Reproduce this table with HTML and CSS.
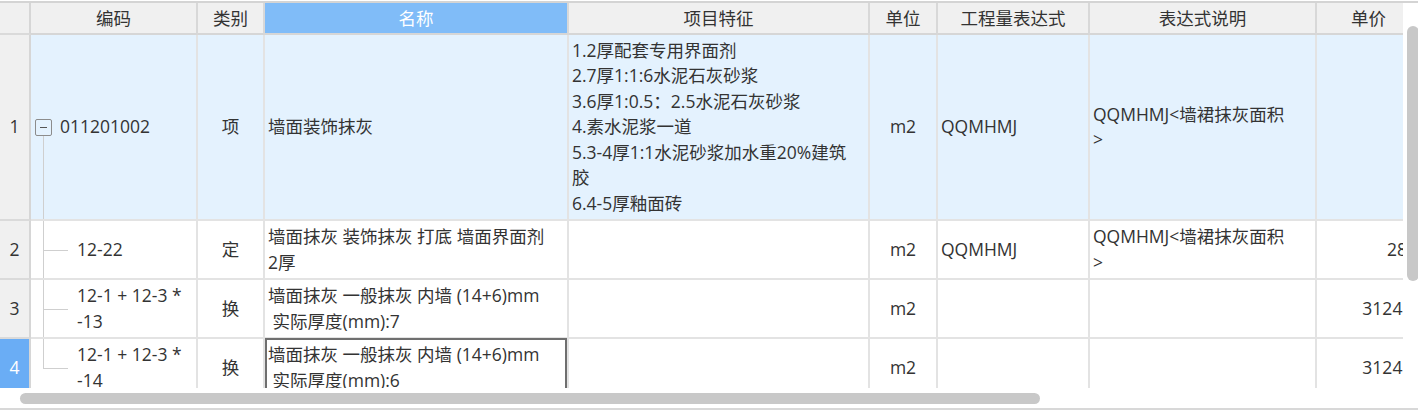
FILE: index.html
```html
<!DOCTYPE html>
<html lang="zh-CN">
<head>
<meta charset="utf-8">
<title>清单</title>
<link rel="stylesheet" href="styles.css">
</head>
<body>
<div class="app">
  <div class="topline"></div>
  <div class="main">
    <div class="viewport">
      <div class="row head">
        <div class="c rn"></div>
        <div class="c ctr">编码</div>
        <div class="c ctr">类别</div>
        <div class="c ctr sel">名称</div>
        <div class="c ctr">项目特征</div>
        <div class="c ctr">单位</div>
        <div class="c ctr">工程量表达式</div>
        <div class="c ctr">表达式说明</div>
        <div class="c ctr">单价</div>
      </div>

      <div class="row r1 hl">
        <div class="c rn">1</div>
        <div class="c code root"><span class="tog"></span><span>011201002</span></div>
        <div class="c ctr">项</div>
        <div class="c"><span>墙面装饰抹灰</span></div>
        <div class="c"><span>1.2厚配套专用界面剂<br>2.7厚1:1:6水泥石灰砂浆<br>3.6厚1:0.5：2.5水泥石灰砂浆<br>4.素水泥浆一道<br>5.3-4厚1:1水泥砂浆加水重20%建筑<br>胶<br>6.4-5厚釉面砖</span></div>
        <div class="c ctr">m2</div>
        <div class="c"><span>QQMHMJ</span></div>
        <div class="c"><span>QQMHMJ&lt;墙裙抹灰面积<br>&gt;</span></div>
        <div class="c rt"></div>
      </div>

      <div class="row r2">
        <div class="c rn">2</div>
        <div class="c code child"><span>12-22</span></div>
        <div class="c ctr">定</div>
        <div class="c"><span>墙面抹灰 装饰抹灰 打底 墙面界面剂<br>2厚</span></div>
        <div class="c"></div>
        <div class="c ctr">m2</div>
        <div class="c"><span>QQMHMJ</span></div>
        <div class="c"><span>QQMHMJ&lt;墙裙抹灰面积<br>&gt;</span></div>
        <div class="c rt"><span>287</span></div>
      </div>

      <div class="row r2">
        <div class="c rn">3</div>
        <div class="c code child"><span>12-1 + 12-3 *<br>-13</span></div>
        <div class="c ctr">换</div>
        <div class="c"><span>墙面抹灰 一般抹灰 内墙 (14+6)mm<br>&nbsp;实际厚度(mm):7</span></div>
        <div class="c"></div>
        <div class="c ctr">m2</div>
        <div class="c"></div>
        <div class="c"></div>
        <div class="c rt"><span>3124.2</span></div>
      </div>

      <div class="row r2">
        <div class="c rn cur">4</div>
        <div class="c code child last"><span>12-1 + 12-3 *<br>-14</span></div>
        <div class="c ctr">换</div>
        <div class="c focus"><span>墙面抹灰 一般抹灰 内墙 (14+6)mm<br>&nbsp;实际厚度(mm):6</span></div>
        <div class="c"></div>
        <div class="c ctr">m2</div>
        <div class="c"></div>
        <div class="c"></div>
        <div class="c rt"><span>3124.2</span></div>
      </div>
    </div>
    <div class="vscroll"><div class="vthumb"></div></div>
  </div>
  <div class="hscroll"><div class="hthumb"></div></div>
  <div class="bottomline"></div>
</div>
</body>
</html>
```
FILE: styles.css
```css
* { box-sizing: border-box; }
html, body { margin: 0; padding: 0; background: #fff; }
body {
  font-family: "Open Sans", "Noto Sans CJK SC", sans-serif;
  font-size: 17.5px;
  color: #333;
}
.app { width: 1418px; height: 412px; overflow: hidden; background: #fff; }
.topline { height: 3px; border-top: 1px solid #fff; background: #d4d4d4; }
.main { display: flex; height: 385px; }
.viewport { width: 1403px; height: 385px; overflow: hidden; flex: none; }
.row {
  display: grid;
  grid-template-columns: 31px 167px 67px 304px 301px 68px 152px 227px 105px;
  width: 1422px;
}
.c {
  position: relative;
  display: flex;
  align-items: center;
  padding: 0 3px;
  white-space: nowrap;
  overflow: hidden;
  line-height: 25.5px;
  border-right: 2px solid #e3e3e3;
  border-bottom: 2px solid #e3e3e3;
}
.ctr { justify-content: center; }
.rt { justify-content: flex-end; }

.head { height: 32px; background: #f0f0f0; }
.head .c { border-right-color: #d8d8d8; border-bottom-color: #d6d6d6; line-height: 30px; }
.head .sel { background: #80bcf8; color: #fff; }

.r1 { height: 186px; }
.r2 { height: 59px; }
.hl .c { background: #e4f2fe; }

.rn { justify-content: center; padding: 0; }
.row .rn { background: #f0f0f0; border-right-color: #d6d6d6; border-bottom-color: #dadada; }
.row .rn.cur { background: #6aadf5; color: #fff; }

.code.root { padding-left: 4px; }
.tog {
  position: relative;
  width: 17px;
  height: 17px;
  border: 1px solid #8c8c8c;
  border-radius: 2px;
  margin-right: 8px;
  flex: none;
}
.tog::after {
  content: "";
  position: absolute;
  left: 4px;
  top: 7px;
  width: 7px;
  height: 1.5px;
  background: #555;
}
.code.root::before {
  content: "";
  position: absolute;
  left: 12px;
  top: calc(50% + 9px);
  bottom: -2px;
  width: 1px;
  background: #cfcfcf;
}
.code.child { padding-left: 46px; }
.code.child::before {
  content: "";
  position: absolute;
  left: 12px;
  top: 0;
  bottom: -2px;
  width: 1px;
  background: #cfcfcf;
}
.code.child.last::before { bottom: auto; height: 50%; }
.code.child::after {
  content: "";
  position: absolute;
  left: 12px;
  top: 50%;
  width: 25px;
  height: 1px;
  background: #cfcfcf;
}

.focus { overflow: visible; }
.focus::after {
  content: "";
  position: absolute;
  left: 0;
  right: 0;
  top: -1px;
  bottom: 0;
  border: 2px solid #6f6f6f;
  border-bottom: none;
}

.vscroll { width: 15px; padding: 23px 0 0 4px; overflow: hidden; flex: none; }
.vthumb { width: 12px; height: 255px; border-radius: 6px; background: #c8c8c8; }

.hscroll { height: 20px; padding: 5px 0 0 20px; }
.hthumb { width: 1020px; height: 11px; border-radius: 6px; background: #c8c8c8; }
.bottomline { height: 2px; background: #d8d8d8; }
```
